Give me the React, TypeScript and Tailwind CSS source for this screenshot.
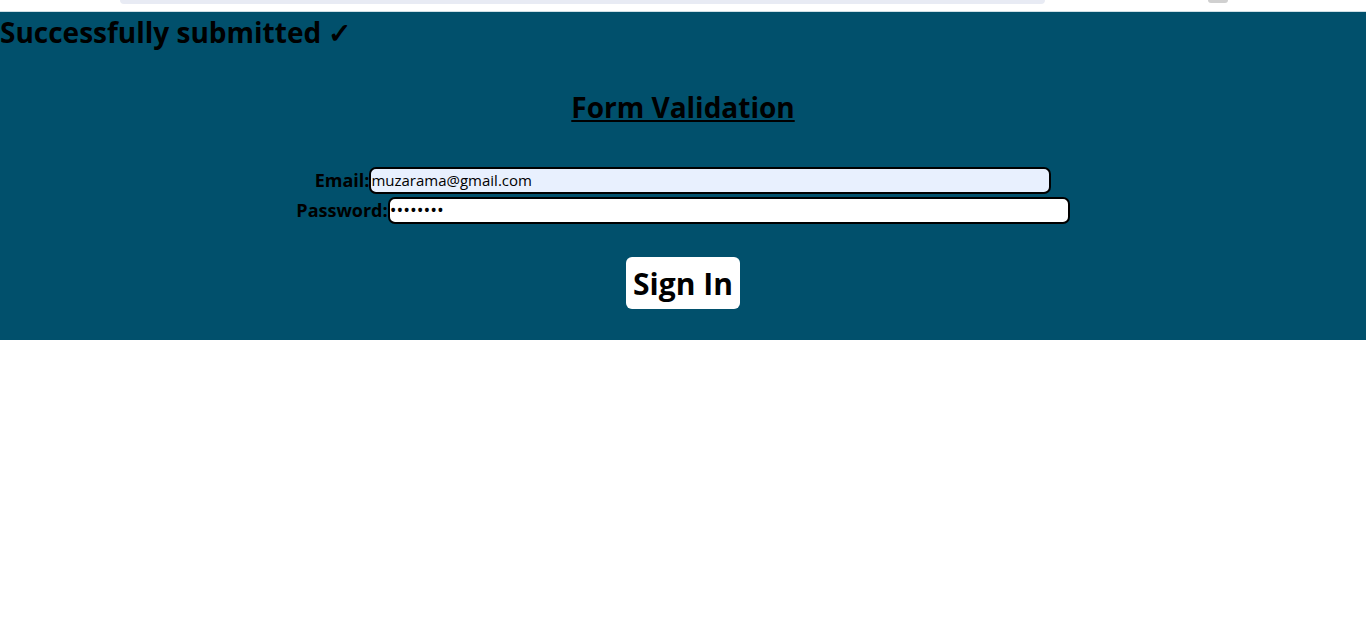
import React from 'react';

const App = () => {
  return (
    <div className="min-h-screen bg-white font-['Open_Sans','Noto_Sans',sans-serif] text-black">
      {/* leftover browser strip */}
      <div className="h-[11px] flex items-start">
        <div className="ml-[120px] w-[925px] h-[4px] bg-[#e8ebf4] rounded-b-[10px]" />
        <div className="ml-[163px] w-[20px] h-[3px] bg-[#d0d0d0] rounded-b-full" />
      </div>
      <div className="h-[1px] bg-[#cfdfe5]" />

      <div className="bg-[#01506c] h-[328px]">
        <h2 className="text-[28px] font-bold leading-[40px]">Successfully submitted ✓</h2>

        {/* Form */}
        <form className="flex flex-col items-center" onSubmit={(e) => e.preventDefault()}>
          <h1 className="mt-[35px] text-[28px] font-bold underline leading-[40px]">Form Validation</h1>

          <div className="mt-[39px] flex items-center h-[28px]">
            <label className="text-[18px] font-bold">Email:</label>
            <input
              type="email"
              defaultValue="muzarama@gmail.com"
              className="w-[682px] h-[27px] border-2 border-black rounded-[7px] bg-[#e8f0fe] text-[15px] px-0 outline-none"
            />
          </div>
          <div className="mt-[2px] flex items-center h-[28px]">
            <label className="text-[18px] font-bold">Password:</label>
            <input
              type="password"
              defaultValue="12345678"
              className="w-[682px] h-[27px] border-2 border-black rounded-[7px] bg-white text-[18px] px-0 outline-none"
            />
          </div>

          <button
            type="submit"
            className="mt-[33px] w-[114px] h-[52px] bg-white rounded-[6px] text-[30px] font-bold"
          >
            Sign In
          </button>
        </form>
      </div>
    </div>
  );
};

export default App;
